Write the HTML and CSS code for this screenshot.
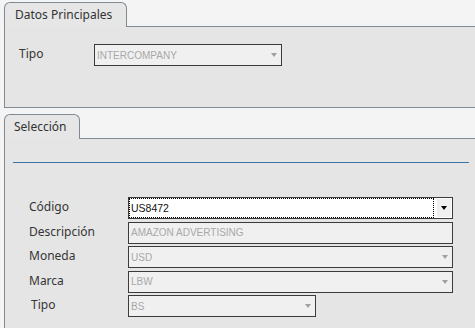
FILE: index.html
```html
<!DOCTYPE html>
<html lang="es">
<head>
    <meta charset="UTF-8">
    <title>Datos Principales</title>
    <link rel="stylesheet" href="styles.css">
</head>
<body>
    <div class="page">
        <section class="panel">
            <div class="tab tab-main">Datos Principales</div>
            <div class="panel-body body-main">
                <div class="row">
                    <span class="label">Tipo</span>
                    <div class="combo disabled combo-tipo-main">
                        <span class="value">INTERCOMPANY</span>
                        <span class="arrow"></span>
                    </div>
                </div>
            </div>
        </section>

        <section class="panel panel-sel">
            <div class="tab tab-sel">Selección</div>
            <div class="panel-body body-sel">
                <div class="rule"></div>
                <div class="form">
                    <div class="row">
                        <span class="label">Código</span>
                        <div class="combo active">
                            <span class="value focus">US8472</span>
                            <span class="btn"><span class="arrow dark"></span></span>
                        </div>
                    </div>
                    <div class="row">
                        <span class="label">Descripción</span>
                        <div class="combo disabled">
                            <span class="value">AMAZON ADVERTISING</span>
                        </div>
                    </div>
                    <div class="row">
                        <span class="label">Moneda</span>
                        <div class="combo disabled">
                            <span class="value">USD</span>
                            <span class="arrow"></span>
                        </div>
                    </div>
                    <div class="row">
                        <span class="label">Marca</span>
                        <div class="combo disabled">
                            <span class="value">LBW</span>
                            <span class="arrow"></span>
                        </div>
                    </div>
                    <div class="row">
                        <span class="label label-tipo">Tipo</span>
                        <div class="combo disabled combo-small">
                            <span class="value">BS</span>
                            <span class="arrow"></span>
                        </div>
                    </div>
                </div>
            </div>
        </section>
    </div>
</body>
</html>
```

FILE: styles.css
```css
* {
    margin: 0;
    padding: 0;
    box-sizing: border-box;
}

body {
    background: #f4f4f4;
    font-family: "Noto Sans", sans-serif;
    font-size: 12px;
    color: #333;
    overflow: hidden;
}

.page {
    padding: 2px 0 0 4px;
}

.panel-sel {
    margin-top: 6px;
}

.tab {
    position: relative;
    z-index: 1;
    height: 25px;
    margin-bottom: -1px;
    padding: 3px 0 0 10px;
    background: #e6e6e6;
    border: 1px solid #7f8a92;
    border-bottom: none;
    border-radius: 6px 6px 0 0;
    line-height: 17px;
}

.tab-main {
    width: 123px;
}

.tab-sel {
    width: 76px;
    padding-left: 9px;
}

.panel-body {
    background: #e5e5e5;
    border: 1px solid #7f8a92;
    border-right: none;
}

.body-main {
    height: 82px;
    padding: 17px 0 0 14px;
}

.body-main .label {
    width: 75px;
}

.body-sel {
    height: 200px;
    border-bottom: none;
    padding-top: 23px;
}

.rule {
    width: 456px;
    height: 1px;
    margin-left: 8px;
    background: #3d74a6;
}

.form {
    display: flex;
    flex-direction: column;
    gap: 2.5px;
    padding: 34px 0 0 24px;
}

.form .label {
    width: 99px;
}

.row {
    display: flex;
    align-items: center;
}

.label {
    margin-top: -3px;
    color: #353535;
}

.label-tipo {
    padding-left: 2px;
}

.combo {
    display: flex;
    align-items: center;
    width: 325px;
    height: 22px;
    border: 1px solid #3b3b3b;
    background: #f0f0f0;
    font-family: "Liberation Sans", sans-serif;
    font-size: 10px;
}

.combo-tipo-main {
    width: 188px;
}

.combo-small {
    width: 188px;
}

.combo .value {
    flex: 1;
    padding-left: 2px;
    color: #a8a8a8;
    white-space: nowrap;
}

.combo.active {
    background: #fff;
}

.combo.active .value {
    align-self: stretch;
    display: flex;
    align-items: center;
    padding-left: 1px;
    border: 1px dotted #000;
    color: #111;
    font-size: 10.5px;
}

.combo .arrow {
    width: 0;
    height: 0;
    margin-right: 4px;
    border-left: 3.5px solid transparent;
    border-right: 3.5px solid transparent;
    border-top: 4px solid #a0a0a0;
}

.combo .btn {
    display: flex;
    align-items: center;
    justify-content: center;
    width: 14px;
    align-self: stretch;
    margin: 1px 1px 1px 3px;
    background: #f0f0f0;
}

.combo .btn .arrow {
    margin: 0;
    border-top-color: #000;
}
```
